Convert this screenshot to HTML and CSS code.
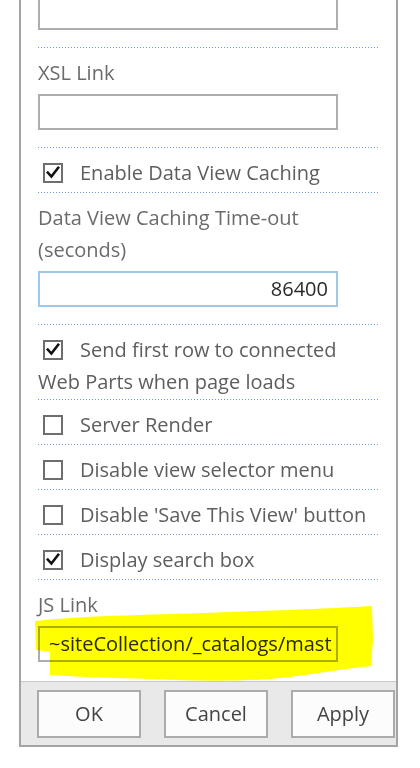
FILE: index.html
```html
<!DOCTYPE html>
<html lang="en">
<head>
<meta charset="utf-8">
<title>Web Part properties</title>
<link rel="stylesheet" href="styles.css">
</head>
<body>
<div class="panel">
  <div class="content">
    <div class="section field first">
      <div class="input"></div>
    </div>
    <div class="section field">
      <div class="label">XSL Link</div>
      <div class="input"></div>
    </div>
    <div class="section check">
      <span class="box on"><svg viewBox="0 0 20 20"><path d="M3.5 9.5 L8 14.5 L16.5 3.5"/></svg></span>Enable Data View Caching
    </div>
    <div class="section field">
      <div class="label">Data View Caching Time-out<br>(seconds)</div>
      <div class="input focus num">86400</div>
    </div>
    <div class="section check multi">
      <span class="box on"><svg viewBox="0 0 20 20"><path d="M3.5 9.5 L8 14.5 L16.5 3.5"/></svg></span>Send first row to connected<br>Web Parts when page loads
    </div>
    <div class="section check">
      <span class="box"></span>Server Render
    </div>
    <div class="section check">
      <span class="box"></span>Disable view selector menu
    </div>
    <div class="section check">
      <span class="box"></span>Disable 'Save This View' button
    </div>
    <div class="section check">
      <span class="box on"><svg viewBox="0 0 20 20"><path d="M3.5 9.5 L8 14.5 L16.5 3.5"/></svg></span>Display search box
    </div>
    <div class="section field last">
      <div class="label">JS Link</div>
      <div class="input text">~siteCollection/_catalogs/mast</div>
    </div>
  </div>
  <div class="buttons">
    <div class="btn">OK</div>
    <div class="btn">Cancel</div>
    <div class="btn">Apply</div>
  </div>
</div>
<svg class="highlight" width="420" height="768" viewBox="0 0 420 768">
  <path d="M35 621 C90 615 160 615 230 612 C290 610 340 608 372 606 L373 640 L371 666 C350 668 320 673 290 677 C250 682 200 681 150 679 C110 678 80 677 50 675 L50 652 L36 650 Z"/>
</svg>
</body>
</html>
```

FILE: styles.css
```css
html, body {
  margin: 0;
  padding: 0;
  background: #ffffff;
  overflow: hidden;
}
body {
  width: 420px;
  height: 768px;
  position: relative;
  font-family: "Open Sans", "Noto Sans", sans-serif;
  font-size: 20px;
  color: #5c5c5c;
}
.panel {
  margin: -17px 0 0 19px;
  width: 375px;
  border: 2px solid #a4a4a4;
  background: #fff;
}
.content {
  padding: 0 17px 0 17px;
}
.section {
  padding: 9px 0 18px;
  background-image: repeating-linear-gradient(to right, #6f97dc 0 1px, transparent 1px 3px);
  background-size: 100% 1px;
  background-repeat: no-repeat;
  background-position: left bottom;
}
.section.last {
  background: none;
  padding-bottom: 19px;
}
.label {
  line-height: 32px;
  color: #6b6b6b;
}
.input {
  box-sizing: border-box;
  width: 300px;
  height: 36px;
  margin-top: 5px;
  border: 2px solid #adadad;
  background: #fff;
  color: #2a2a2a;
  line-height: 32px;
  white-space: nowrap;
  overflow: hidden;
}
.section.first .input { margin-top: 0; }
.input.focus {
  border-color: #9fc8ea;
}
.input.num {
  text-align: right;
  padding-right: 8px;
}
.input.text {
  padding-left: 9px;
}
.section.check {
  padding: 9px 0 4px;
  line-height: 32px;
  color: #5e5e5e;
}
.section.check.multi {
  padding-bottom: 2px;
}
.box {
  display: inline-block;
  box-sizing: border-box;
  width: 20px;
  height: 20px;
  border: 2px solid #6e6e6e;
  margin: 0 17px 0 5px;
  vertical-align: -3px;
  background: #fff;
}
.box svg {
  display: block;
  width: 16px;
  height: 16px;
}
.box svg path {
  fill: none;
  stroke: #111;
  stroke-width: 3.2;
  stroke-linecap: square;
}
.buttons {
  display: flex;
  gap: 23px;
  padding: 8px 0 7px 16px;
  border-top: 1px solid #c8c8c8;
  background: #e9e9e9;
}
.btn {
  box-sizing: border-box;
  width: 104px;
  height: 48px;
  flex: none;
  border: 2px solid #ababab;
  background: #fcfcfc;
  color: #444;
  text-align: center;
  line-height: 44px;
}
.highlight {
  position: absolute;
  left: 0;
  top: 0;
  pointer-events: none;
  mix-blend-mode: multiply;
}
.highlight path {
  fill: #ffff00;
}
```
